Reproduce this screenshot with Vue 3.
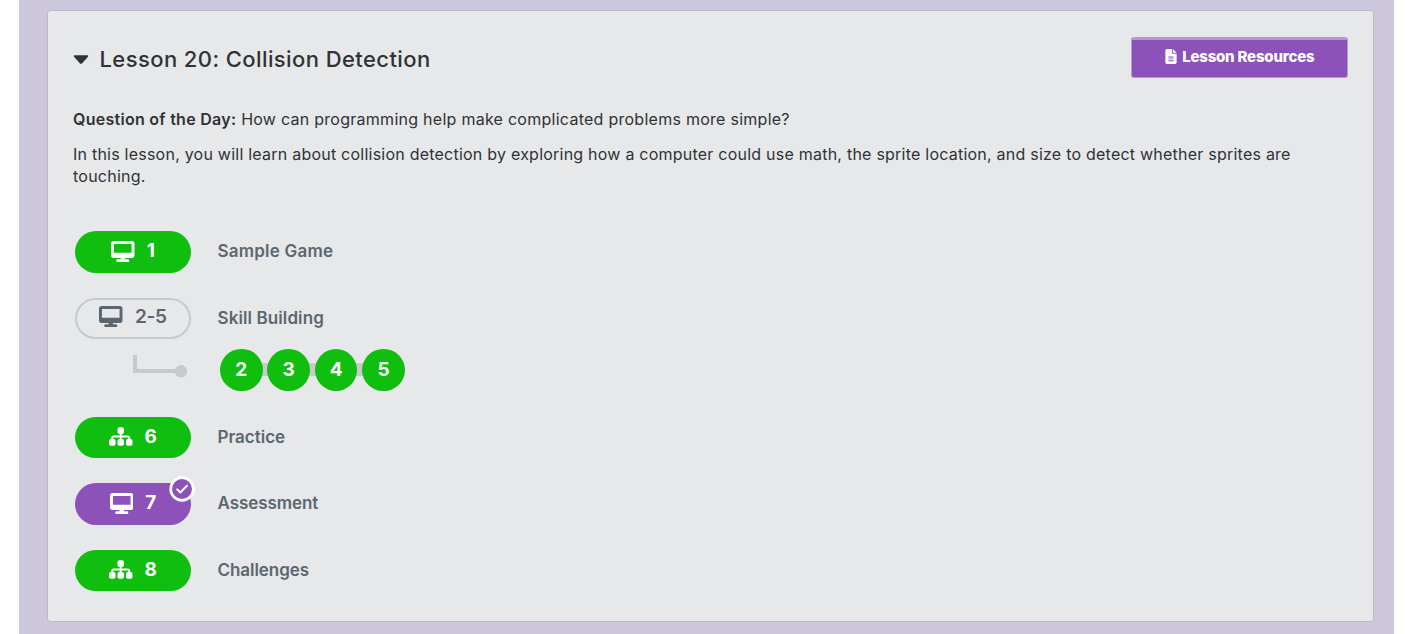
<script setup>
const desktop = 'M64 0C28.7 0 0 28.7 0 64V352c0 35.3 28.7 64 64 64H240l-10.7 32H160c-17.7 0-32 14.3-32 32s14.3 32 32 32H416c17.7 0 32-14.3 32-32s-14.3-32-32-32H346.7L336 416H512c35.3 0 64-28.7 64-64V64c0-35.3-28.7-64-64-64H64zM504 72V288H72V72H504z'
const sitemap = 'M208 80c0-26.5 21.5-48 48-48h64c26.5 0 48 21.5 48 48v64c0 26.5-21.5 48-48 48h-8v40H464c30.9 0 56 25.1 56 56v32h8c26.5 0 48 21.5 48 48v64c0 26.5-21.5 48-48 48H464c-26.5 0-48-21.5-48-48V368c0-26.5 21.5-48 48-48h8V288c0-4.4-3.6-8-8-8H312v40h8c26.5 0 48 21.5 48 48v64c0 26.5-21.5 48-48 48H256c-26.5 0-48-21.5-48-48V368c0-26.5 21.5-48 48-48h8V280H112c-4.4 0-8 3.6-8 8v32h8c26.5 0 48 21.5 48 48v64c0 26.5-21.5 48-48 48H48c-26.5 0-48-21.5-48-48V368c0-26.5 21.5-48 48-48h8V288c0-30.9 25.1-56 56-56H264V192h-8c-26.5 0-48-21.5-48-48V80z'

const levels = [
  { num: '1', name: 'Sample Game', icon: desktop, kind: 'perfect' },
  { num: '2-5', name: 'Skill Building', icon: desktop, kind: 'group', bubbles: ['2', '3', '4', '5'] },
  { num: '6', name: 'Practice', icon: sitemap, kind: 'perfect' },
  { num: '7', name: 'Assessment', icon: desktop, kind: 'assessment' },
  { num: '8', name: 'Challenges', icon: sitemap, kind: 'perfect' }
]
</script>

<template>
  <main class="unit">
    <section class="card">
      <header class="head">
        <svg class="caret" viewBox="0 0 16 10"><path d="M1.6 0.3H14.4Q16 0.5 15 1.8L9.2 8.2Q8 9.4 6.8 8.2L1 1.8Q0 0.5 1.6 0.3Z" /></svg>
        <h2 class="title">Lesson 20: Collision Detection</h2>
        <button class="resources">
          <svg class="file" viewBox="0 0 384 512"><path fill-rule="evenodd" d="M64 0C28.7 0 0 28.7 0 64V448c0 35.3 28.7 64 64 64H320c35.3 0 64-28.7 64-64V160H256c-17.7 0-32-14.3-32-32V0H64zM256 0V128H384L256 0zM112 256H272c8.8 0 16 7.2 16 16s-7.2 16-16 16H112c-8.8 0-16-7.2-16-16s7.2-16 16-16zm0 64H272c8.8 0 16 7.2 16 16s-7.2 16-16 16H112c-8.8 0-16-7.2-16-16s7.2-16 16-16zm0 64H272c8.8 0 16 7.2 16 16s-7.2 16-16 16H112c-8.8 0-16-7.2-16-16s7.2-16 16-16z" /></svg>
          <span class="rtext">Lesson Resources</span>
        </button>
      </header>
      <p class="question"><strong>Question of the Day:</strong> <span>How can programming help make complicated problems more simple?</span></p>
      <p class="about">In this lesson, you will learn about collision detection by exploring how a computer could use math, the sprite location, and size to detect whether sprites are touching.</p>
      <div class="levels">
        <div v-for="l in levels" :key="l.num" class="level" :class="{ tall: l.bubbles }">
          <div class="row">
            <div class="pill" :class="l.kind">
              <svg class="icon" viewBox="0 0 576 512"><path :d="l.icon" /></svg>
              <span class="num">{{ l.num }}</span>
              <svg v-if="l.kind === 'assessment'" class="badge" viewBox="0 0 26 26">
                <circle cx="13" cy="13" r="11.3" />
                <path d="M8.2 13.4L11.3 16.5L18 9.8" />
              </svg>
            </div>
            <span class="name" :class="'n' + l.num">{{ l.name }}</span>
          </div>
          <div v-if="l.bubbles" class="sub">
            <svg class="elbow" viewBox="0 0 56 30"><path d="M2 5V21H48" /><circle cx="48" cy="21.3" r="6.2" /></svg>
            <div class="bubbles">
              <template v-for="(b, i) in l.bubbles" :key="b">
                <span v-if="i" class="link"></span>
                <span class="bubble">{{ b }}</span>
              </template>
            </div>
          </div>
        </div>
      </div>
    </section>
  </main>
</template>

<style>
body { background: #fff; overflow: hidden; }
</style>

<style scoped>
.unit {
  box-sizing: border-box;
  height: 634px;
  margin: 0 11px 0 19px;
  padding: 10px 20px 12px 28px;
  background: #cec8dc;
  font-family: Inter, "Open Sans", sans-serif;
  color: #2f3336;
}
.card {
  box-sizing: border-box;
  width: 1327px;
  height: 612px;
  padding: 26px 25px 0;
  border: 1px solid #bbb;
  border-radius: 3px;
  background: #e6e8e9;
}
.head { display: flex; align-items: flex-start; height: 69px; }
.caret { width: 16px; height: 10px; margin-top: 18px; fill: #2f3336; }
.title { margin: 6px 0 0 10.5px; font-size: 22px; line-height: 32px; font-weight: 500; white-space: nowrap; letter-spacing: 0.41px; }
.resources {
  display: flex;
  align-items: flex-start;
  justify-content: center;
  box-sizing: border-box;
  width: 217px;
  height: 41px;
  margin: 0 0 0 auto;
  padding: 9px 0 0;
  border: 1px solid #b797d0;
  border-top-width: 3px;
  border-radius: 3px;
  background: #8c52ba;
  color: #fff;
  font-family: inherit;
}
.file { width: 12px; height: 15px; fill: #fff; margin: 0 5.5px 0 0; }
.rtext { font-size: 15px; line-height: 16px; font-weight: 800; white-space: nowrap; letter-spacing: -0.2px; }
.question, .about { margin: 0; font-size: 16px; line-height: 22px; letter-spacing: 0.265px; }
.question { margin-top: 2px; }
.question strong { font-weight: 600; letter-spacing: 0.28px; }
.about { margin-top: 13px; letter-spacing: 0.23px; }
.levels { margin: 44px 0 0 2px; }
.level { height: 66.5px; }
.level.tall { height: 119px; }
.row { display: flex; align-items: flex-start; height: 51px; }
.pill {
  position: relative;
  display: flex;
  align-items: center;
  justify-content: center;
  gap: 12px;
  box-sizing: border-box;
  width: 116px;
  height: 41.5px;
  padding-bottom: 1px;
  border-radius: 21px;
  background: #0fbe0f;
  color: #fff;
}
.pill.group { border: 2px solid #c6cacd; background: transparent; color: #5b6770; padding-bottom: 3px; }
.pill.assessment { background: #8c52ba; }
.icon { width: 23.5px; height: 21px; fill: currentColor; }
.num { font-size: 19px; line-height: 24px; font-weight: 700; }
.group .num { font-weight: 600; letter-spacing: -0.3px; }
.badge { position: absolute; left: 94px; top: -7.5px; width: 26px; height: 26px; fill: #8c52ba; stroke: #fff; stroke-width: 2.7px; stroke-linecap: round; stroke-linejoin: round; }
.badge path { fill: none; stroke-width: 2px; }
.name { margin: 9px 0 0 26.5px; font-size: 17px; line-height: 22px; font-weight: 600; color: #5b6770; }
.n1 { letter-spacing: 0.22px; }
.n2-5 { letter-spacing: 0.1px; }
.n7, .n8 { letter-spacing: -0.06px; }
.sub { display: flex; align-items: flex-start; padding-left: 58px; }
.elbow { width: 56px; height: 30px; margin: 1px 0 0; fill: #c6cacd; }
.elbow path { fill: none; stroke: #c6cacd; stroke-width: 4px; }
.bubbles { display: flex; align-items: center; margin-left: 31px; }
.bubble { position: relative; z-index: 1; width: 42.6px; height: 42.6px; border-radius: 50%; background: #0fbe0f; color: #fff; font-size: 19px; font-weight: 700; line-height: 42.6px; text-align: center; }
.link { width: 8.8px; height: 13px; margin: 0 -2px; background: #c6cacd; }
</style>
